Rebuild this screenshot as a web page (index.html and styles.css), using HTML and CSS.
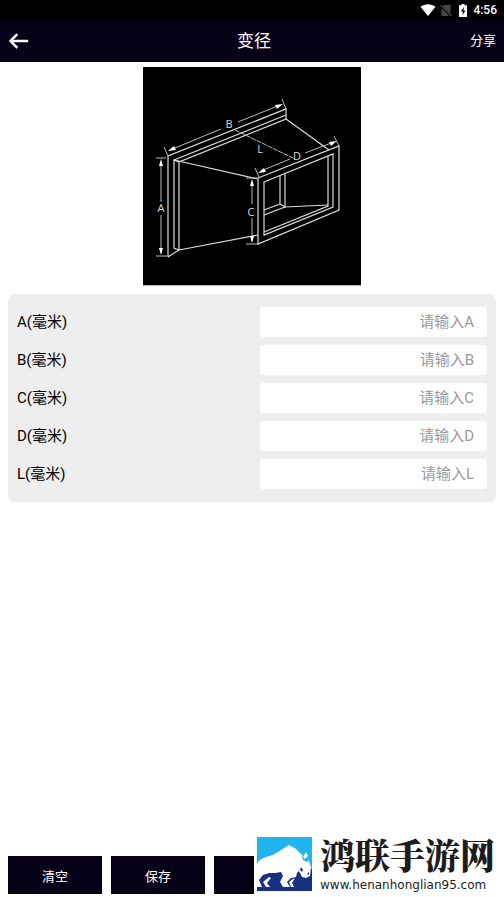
FILE: index.html
```html
<!DOCTYPE html>
<html lang="zh-CN">
<head>
    <meta charset="UTF-8">
    <meta name="viewport" content="width=device-width, initial-scale=1.0">
    <title>变径</title>
    <link rel="stylesheet" href="styles.css">
</head>
<body>
    <div class="status-bar">
        <svg class="wifi" width="16" height="12" viewBox="0 0 16 12">
            <path d="M0.5 2.8C4.8 -0.6 11.2 -0.6 15.5 2.8L8 12Z" fill="#fff"/>
        </svg>
        <svg class="sim" width="12" height="13" viewBox="0 0 12 13">
            <path d="M4 1H10.5V12H1.5V3.5Z" fill="#484848"/>
            <path d="M0 1L11.5 12.5" stroke="#000" stroke-width="2.4"/>
            <path d="M0.5 1L11.5 12" stroke="#777" stroke-width="1"/>
        </svg>
        <svg class="battery" width="8" height="13" viewBox="0 0 8 13">
            <path d="M2.5 0H5.5V1.2H8V13H0V1.2H2.5Z" fill="#fff"/>
            <path d="M4.8 3L1.8 7.6H3.8V11L6.4 6.4H4.6Z" fill="#000"/>
        </svg>
        <span class="clock">4:56</span>
    </div>

    <header class="navbar">
        <button type="button" class="back" aria-label="返回">
            <svg width="20" height="16" viewBox="0 0 20 16">
                <path d="M8.3 1.2L1.5 8L8.3 14.8M1.8 8H19.2" fill="none" stroke="#fff" stroke-width="2.4"/>
            </svg>
        </button>
        <h1>变径</h1>
        <button type="button" class="share">分享</button>
    </header>

    <main>
        <svg class="diagram" viewBox="0 0 218 218" role="img" aria-label="变径示意图">
            <rect width="218" height="218" fill="#000"/>
            <!-- rear frame -->
            <g class="edge">
                <path d="M25 190V89L143 42V52L36 95V183L25 190"/>
                <path d="M36 95L31 93L143 48M31 93V181L36 183"/>
            </g>
            <!-- sides -->
            <g class="edge">
                <path d="M31 93L115 112M36 183L115 168M143 52L186 83"/>
            </g>
            <!-- front frame -->
            <g class="edge">
                <path d="M115 111L196 79V143L115 177Z"/>
                <path d="M121 115L190 87V140L121 168Z"/>
                <path d="M185 89V139L121 165"/>
                <path d="M137 109V137L142 140V107M142 140L185 138M137 137L121 143M142 140L121 148"/>
            </g>
            <!-- dimension lines -->
            <g class="dim">
                <path d="M21 80L25 89M27 83L78 62M95 55L137 38M139 32L143 42"/>
                <path d="M13 91H23M18 95V135M18 148V186M13 189H24"/>
                <path d="M103 111H115M109 115V137M109 151V174M103 177H115"/>
                <path d="M112 101L116 110M118 104L147 92M162 86L191 75M191 69L196 79"/>
                <path d="M92 63L152 92" stroke-dasharray="5 1"/>
            </g>
            <g fill="#fff">
                <path d="M25 84L31 79L33 83ZM140 37L132 38L134 42Z"/>
                <path d="M18 92L16 99H20ZM18 188L16 181H20Z"/>
                <path d="M109 112L107 119H111ZM109 176L107 169H111Z"/>
                <path d="M115 106L121 101L123 105ZM194 74L186 75L188 79Z"/>
            </g>
            <g class="mark">
                <text x="86" y="61">B</text>
                <text x="18" y="145">A</text>
                <text x="108" y="149">C</text>
                <text x="154" y="93">D</text>
                <text x="117" y="86">L</text>
            </g>
        </svg>

        <form class="panel" id="sizes">
            <div class="row">
                <label for="a">A(毫米)</label>
                <input type="text" id="a" placeholder="请输入A">
            </div>
            <div class="row">
                <label for="b">B(毫米)</label>
                <input type="text" id="b" placeholder="请输入B">
            </div>
            <div class="row">
                <label for="c">C(毫米)</label>
                <input type="text" id="c" placeholder="请输入C">
            </div>
            <div class="row">
                <label for="d">D(毫米)</label>
                <input type="text" id="d" placeholder="请输入D">
            </div>
            <div class="row">
                <label for="l">L(毫米)</label>
                <input type="text" id="l" placeholder="请输入L">
            </div>
        </form>
    </main>

    <footer class="actions">
        <button type="reset" form="sizes">清空</button>
        <button type="button">保存</button>
        <button type="button" class="more" aria-label="更多"></button>
        <div class="brand">
            <svg width="55" height="54" viewBox="0 0 55 54">
                <rect width="55" height="54" fill="#20b5ee"/>
                <path d="M0 32H55V54H0Z" fill="#17307f"/>
                <!-- bison -->
                <path d="M0 27C2 23 5 21 9 20L16 18L32 8L39 12L44 17L48 19L52 24L54 30L53 39L49 41L45 40L42 34L40 36L39 40L34 41L30 45L33 50H26L23 45L26 39L24 35L18 36L12 36L6 38L2 43L5 50H0Z" fill="#fff"/>
                <path d="M48 10C52 14 51 17 49 19C53 18 54 22 50 25L46 23L45 19C48 17 49 14 48 10Z" fill="#20b5ee"/>
                <path d="M49 15L51 19L48 22L46 20Z" fill="#fff"/>
                <path d="M12 40L6 45L9 50H13L10 46L14 41ZM36 42L32 45L34 50H37L35 46L38 41Z" fill="#fff"/>
                <path d="M44 30L46 33L45 35L43 33ZM50 37L52 35V38Z" fill="#17307f"/>
            </svg>
            <div class="brand-text">
                <strong>鸿联手游网</strong>
                <span>www.henanhonglian95.com</span>
            </div>
        </div>
    </footer>
</body>
</html>
```

FILE: styles.css
```css
* {
    box-sizing: border-box;
}

body {
    font-family: Roboto, "Noto Sans CJK SC", sans-serif;
    margin: 0;
    min-height: 100vh;
    display: flex;
    flex-direction: column;
    background-color: #fff;
    color: #000;
}

button {
    font-family: inherit;
    background-color: #070117;
    color: #fff;
    padding: 0;
    border: none;
    cursor: pointer;
}

.status-bar {
    display: flex;
    justify-content: flex-end;
    align-items: center;
    height: 20px;
    padding-right: 7px;
    background-color: #000;
    color: #fff;
}

.sim {
    margin-left: 4px;
}

.battery {
    margin: 0 6px 0 7px;
}

.clock {
    font-size: 12px;
    font-weight: 500;
}

.navbar {
    display: grid;
    grid-template-columns: 1fr auto 1fr;
    align-items: center;
    height: 42px;
    padding: 0 8px;
    background-color: #070117;
    color: #fff;
}

.navbar h1 {
    margin: 0;
    padding-left: 4px;
    font-size: 17px;
    font-weight: 400;
    line-height: 24px;
}

.back {
    justify-self: start;
    display: flex;
    padding-left: 1px;
}

.share {
    justify-self: end;
    font-size: 13px;
    line-height: 20px;
}

main {
    flex: 1;
    padding: 5px 8px;
}

.diagram {
    display: block;
    width: 218px;
    margin: 0 auto 8px;
    border-bottom: 1px solid #bbb;
}

.edge path {
    fill: none;
    stroke: #ddd;
    stroke-width: 1.2;
}

.dim path {
    fill: none;
    stroke: #bbb;
    stroke-width: 1;
}

.mark text {
    fill: #ddd;
    font-family: "Open Sans", sans-serif;
    font-size: 11px;
    text-anchor: middle;
}

.panel {
    display: flex;
    flex-direction: column;
    gap: 8px;
    padding: 13px 9px;
    border-radius: 7px;
    background-color: #eee;
}

.row {
    display: grid;
    grid-template-columns: 1fr 1fr;
    gap: 16px;
}

.row label {
    font-size: 15px;
    line-height: 30px;
}

.row input {
    width: 100%;
    height: 30px;
    padding: 0 13px;
    border: none;
    border-radius: 3px;
    background-color: #fff;
    font-family: inherit;
    font-size: 15px;
    text-align: right;
}

.row input::placeholder {
    color: #999;
}

.actions {
    position: relative;
    display: flex;
    gap: 9px;
    padding: 0 8px 3px;
}

.actions button {
    width: 94px;
    height: 38px;
    font-size: 13px;
}

/* sits over the right end of the button bar */
.brand {
    position: absolute;
    right: 0;
    bottom: 0;
    display: flex;
    gap: 8px;
    width: 250px;
    height: 63px;
    padding: 3px 0 0 3px;
    background-color: #fff;
}

.brand svg {
    flex: none;
}

.brand-text {
    display: flex;
    flex-direction: column;
    gap: 6px;
    color: #1c1c1c;
    white-space: nowrap;
}

.brand-text strong {
    font-family: "Noto Serif CJK SC", "Noto Sans CJK SC", serif;
    font-size: 35px;
    font-weight: 900;
    line-height: 35px;
}

.brand-text span {
    font-family: "DejaVu Sans", sans-serif;
    font-size: 12px;
    line-height: 14px;
}
```
